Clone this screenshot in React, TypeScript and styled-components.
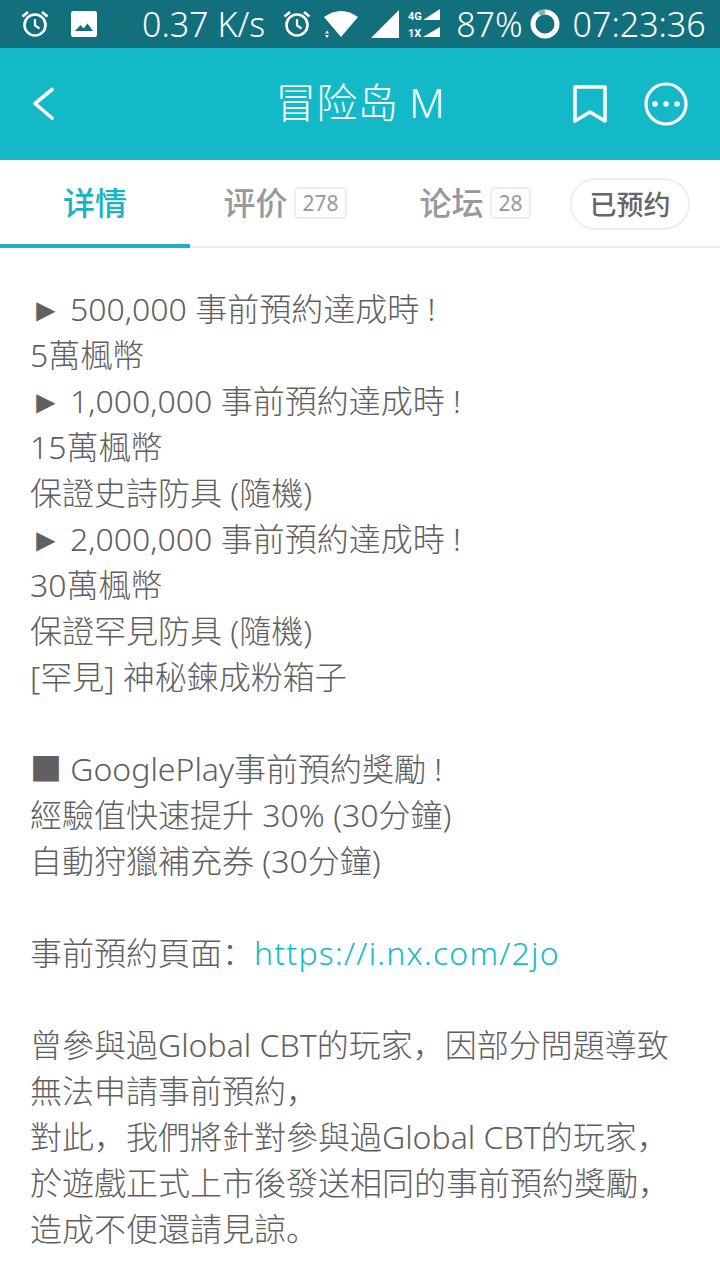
import React from "react";
import styled, { createGlobalStyle } from "styled-components";

const Global = createGlobalStyle`
  html, body { margin: 0; padding: 0; background: #fff; }
  body { font-family: "Noto Sans", "Noto Sans CJK SC", sans-serif; }
`;

const Page = styled.div`
  width: 720px;
  height: 1280px;
  overflow: hidden;
  display: flex;
  flex-direction: column;
  background: #fff;
`;

const StatusBar = styled.div`
  height: 48px;
  background: #11707c;
  display: flex;
  align-items: center;
  color: #fff;
  font-size: 34px;
  font-weight: 300;
  padding-left: 20px;
  flex: none;
`;

const StatusText = styled.span<{ $ml: number }>`
  margin-left: ${(p) => p.$ml}px;
  line-height: 48px;
  white-space: nowrap;
`;

const StatusIcon = styled.svg<{ $ml: number }>`
  margin-left: ${(p) => p.$ml}px;
  flex: none;
  display: block;
`;

const Header = styled.div`
  height: 112px;
  background: #14b9c8;
  display: flex;
  align-items: center;
  position: relative;
  flex: none;
  color: #fff;
  padding: 0 32px;
  justify-content: space-between;
`;

const Title = styled.div`
  position: absolute;
  left: 0;
  right: 0;
  top: -2px;
  text-align: center;
  font-size: 41px;
  font-weight: 300;
  line-height: 112px;
`;

const HeaderRight = styled.div`
  display: flex;
  align-items: center;
  gap: 37px;
`;

const Tabs = styled.div`
  height: 88px;
  box-sizing: border-box;
  border-bottom: 2px solid #eceeee;
  display: flex;
  align-items: flex-start;
  flex: none;
`;

const Tab = styled.div<{ $active?: boolean }>`
  width: 190px;
  height: 88px;
  box-sizing: border-box;
  display: flex;
  align-items: center;
  justify-content: center;
  gap: 7px;
  font-size: 32px;
  font-weight: 500;
  color: ${(p) => (p.$active ? "#1ab3c2" : "#999")};
  border-bottom: ${(p) => (p.$active ? "4px solid #1ab3c2" : "none")};
  padding-bottom: ${(p) => (p.$active ? "3px" : "7px")};
  flex: none;
`;

const Count = styled.span`
  font-size: 21px;
  font-weight: 400;
  color: #999;
  border: 2px solid #eee;
  border-radius: 4px;
  height: 32px;
  line-height: 29px;
  box-sizing: border-box;
  padding: 0 6px;
  margin-top: 4px;
`;

const Reserve = styled.div`
  width: 120px;
  height: 52px;
  margin-top: 18px;
  padding-bottom: 2px;
  box-sizing: border-box;
  border: 2px solid #eee;
  border-radius: 26px;
  display: flex;
  align-items: center;
  justify-content: center;
  color: #666;
  font-size: 27px;
  font-weight: 500;
  white-space: nowrap;
`;

const Body = styled.div`
  padding: 38px 30px 0;
  font-size: 32px;
  font-weight: 300;
  line-height: 46px;
  color: #606060;
`;

const Line = styled.div`
  height: 46px;
  white-space: nowrap;
`;

const Link = styled.span`
  color: #14b9c8;
  letter-spacing: 1.2px;
`;

const AlarmIcon = ({ ml }: { ml: number }) => (
  <StatusIcon $ml={ml} width="30" height="30" viewBox="0 0 30 30" fill="none" stroke="#fff">
    <circle cx="15" cy="16" r="10.5" strokeWidth="2.6" />
    <path d="M15 10v6.5l4.5 3" strokeWidth="2.2" />
    <path d="M2.5 7.5 8 3M27.5 7.5 22 3" strokeWidth="2.8" />
  </StatusIcon>
);

const lines: React.ReactNode[] = [
  "► 500,000 事前預約達成時 !",
  "5萬楓幣",
  "► 1,000,000 事前預約達成時 !",
  "15萬楓幣",
  "保證史詩防具 (隨機)",
  "► 2,000,000 事前預約達成時 !",
  "30萬楓幣",
  "保證罕見防具 (隨機)",
  "[罕見] 神秘鍊成粉箱子",
  "",
  "■ GooglePlay事前預約獎勵 !",
  "經驗值快速提升 30% (30分鐘)",
  "自動狩獵補充券 (30分鐘)",
  "",
  <>事前預約頁面：<Link>https://i.nx.com/2jo</Link></>,
  "",
  "曾參與過Global CBT的玩家，因部分問題導致",
  "無法申請事前預約，",
  "對此，我們將針對參與過Global CBT的玩家，",
  "於遊戲正式上市後發送相同的事前預約獎勵，",
  "造成不便還請見諒。",
];

export default function App() {
  return (
    <Page>
      <Global />
      <StatusBar>
        <AlarmIcon ml={0} />
        <StatusIcon $ml={20} width="28" height="28" viewBox="0 0 28 28">
          <path fillRule="evenodd" fill="#fff" d="M3 1h22a2 2 0 0 1 2 2v22a2 2 0 0 1-2 2H3a2 2 0 0 1-2-2V3a2 2 0 0 1 2-2Zm2 20h18l-5.5-7.5-4 5-3-3.5Z" />
        </StatusIcon>
        <StatusText $ml={44}>0.37 K/s</StatusText>
        <AlarmIcon ml={17} />
        <StatusIcon $ml={12} width="34" height="30" viewBox="0 0 34 30">
          <path fill="#fff" d="M0 8Q17-4 34 8L17 28Z" />
          <path fill="#fff" d="M3 21.5 5 24.5H1ZM3 29 1 26H5Z" />
        </StatusIcon>
        <StatusIcon $ml={12} width="30" height="30" viewBox="0 0 30 30">
          <path fill="#fff" d="M29 1v28H1Z" />
        </StatusIcon>
        <StatusIcon $ml={7} width="34" height="30" viewBox="0 0 34 30">
          <path fill="#fff" d="M33 0v11H16ZM33 18v10H16Z" />
          <text x="1" y="11" fill="#fff" fontSize="11" fontWeight="700" fontFamily="Roboto, sans-serif">4G</text>
          <text x="1" y="28" fill="#fff" fontSize="11" fontWeight="700" fontFamily="Roboto, sans-serif">1X</text>
        </StatusIcon>
        <StatusText $ml={15}>87%</StatusText>
        <StatusIcon $ml={7} width="30" height="30" viewBox="0 0 30 30" fill="none">
          <circle cx="15" cy="15" r="12" stroke="#fff" strokeWidth="5" />
          <path d="M9 4.6 Q12 3 15 3" stroke="#7fb0b6" strokeWidth="5" />
        </StatusIcon>
        <StatusText $ml={13}>07:23:36</StatusText>
      </StatusBar>
      <Header>
        <Title>冒险岛 M</Title>
        <svg width="24" height="36" viewBox="0 0 24 36" fill="none" stroke="#fff" strokeWidth="3.6" strokeLinecap="round" strokeLinejoin="round">
          <path d="M20 3.5 3 17.5l17 14.5" />
        </svg>
        <HeaderRight>
          <svg width="34" height="38" viewBox="0 0 34 38" fill="none" stroke="#fff" strokeWidth="3.6" strokeLinejoin="round">
            <path d="M2 2h30v34L17 27 2 36Z" />
          </svg>
          <svg width="44" height="44" viewBox="0 0 44 44" fill="none">
            <circle cx="22" cy="22" r="20" stroke="#fff" strokeWidth="3.2" />
            <circle cx="11" cy="22" r="2.8" fill="#fff" />
            <circle cx="22" cy="22" r="2.8" fill="#fff" />
            <circle cx="33" cy="22" r="2.8" fill="#fff" />
          </svg>
        </HeaderRight>
      </Header>
      <Tabs>
        <Tab $active>详情</Tab>
        <Tab>评价<Count>278</Count></Tab>
        <Tab>论坛<Count>28</Count></Tab>
        <Reserve>已预约</Reserve>
      </Tabs>
      <Body>
        {lines.map((l, i) => (
          <Line key={i}>{l}</Line>
        ))}
      </Body>
    </Page>
  );
}
